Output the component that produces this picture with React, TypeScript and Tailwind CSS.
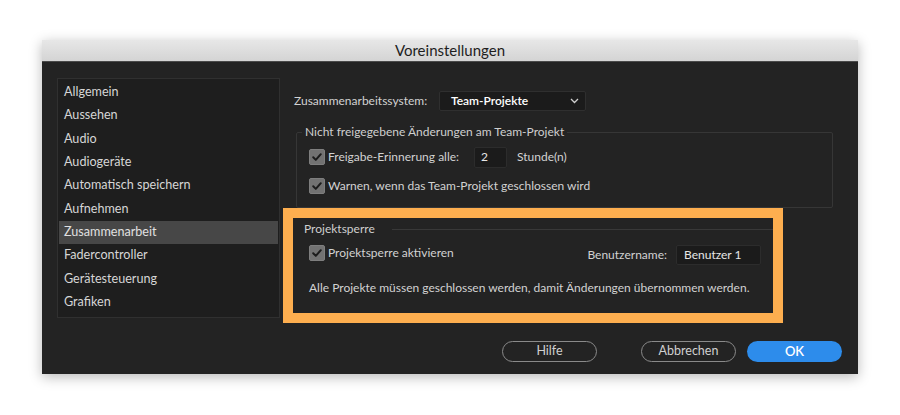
import React from "react";

const items = [
  "Allgemein",
  "Aussehen",
  "Audio",
  "Audiogeräte",
  "Automatisch speichern",
  "Aufnehmen",
  "Zusammenarbeit",
  "Fadercontroller",
  "Gerätesteuerung",
  "Grafiken",
];

function Check() {
  return (
    <div className="w-[16px] h-[16px] rounded-[2px] bg-[#727272] border border-[#7e7e7e] flex items-center justify-center shrink-0">
      <svg width="12" height="12" viewBox="0 0 12 12">
        <path d="M2.2 6.3 L4.8 8.9 L9.8 3.2" fill="none" stroke="#1c1c1c" strokeWidth="2" strokeLinecap="round" strokeLinejoin="round" />
      </svg>
    </div>
  );
}

export default function App() {
  return (
    <div className="w-[900px] h-[415px] bg-white pt-[40px] pl-[42px] font-['Lato',sans-serif]">
      <div className="w-[816px] h-[334px] flex flex-col bg-[#232323] shadow-[0_3px_12px_rgba(0,0,0,0.28)]">
        <div className="h-[22px] shrink-0 bg-gradient-to-b from-[#e7e7e7] to-[#d4d4d4] border-b border-[#4a4a4a] flex items-center justify-center text-[15px] text-[#1e1e1e] leading-none">
          Voreinstellungen
        </div>
        <div className="flex flex-1">
          <div className="pl-[15px] pt-[16px]">
            <div className="w-[223px] h-[240px] border border-[#303030] bg-[#1e1e1e] pt-[1.5px] px-px">
              {items.map((it) => (
                <div
                  key={it}
                  className={
                    "h-[23.4px] flex items-center pl-[5px] text-[12.6px] " +
                    (it === "Zusammenarbeit" ? "bg-[#474747] text-[#e0e0e0]" : "text-[#d6d6d6]")
                  }
                >
                  {it}
                </div>
              ))}
            </div>
          </div>
          <div className="flex-1 flex flex-col text-[12px] text-[#d2d2d2]">
            <div className="mt-[29px] h-[20px] flex items-center pl-[14px]">
              <div className="w-[145px]">Zusammenarbeitssystem:</div>
              <div className="w-[147px] h-[20px] bg-[#1b1b1b] border border-[#2f2f2f] rounded-[2px] flex items-center pl-[11px] pr-[6px]">
                <span className="text-white font-semibold flex-1">Team-Projekte</span>
                <svg width="9" height="6" viewBox="0 0 9 6">
                  <path d="M1 1 L4.5 4.5 L8 1" fill="none" stroke="#cfcfcf" strokeWidth="1.3" />
                </svg>
              </div>
            </div>
            <fieldset className="ml-[16px] mt-[13px] w-[537px] h-[84px] border border-[#363636] rounded-[2px]">
              <legend className="ml-[5px] px-[3px] leading-[16px] text-[#cfcfcf]">
                Nicht freigegebene Änderungen am Team-Projekt
              </legend>
              <div className="mt-[7px] h-[20px] flex items-center pl-[12px]">
                <Check />
                <span className="ml-[3px] w-[146px]">Freigabe-Erinnerung alle:</span>
                <div className="w-[33px] h-[21px] bg-[#1b1b1b] border border-[#2c2c2c] rounded-[2px] flex items-center pl-[6px] text-[#e6e6e6]">
                  2
                </div>
                <span className="ml-[10px]">Stunde(n)</span>
              </div>
              <div className="mt-[9px] h-[20px] flex items-center pl-[12px]">
                <Check />
                <span className="ml-[3px]">Warnen, wenn das Team-Projekt geschlossen wird</span>
              </div>
            </fieldset>
            <div className="ml-[3px] w-[500px] h-[115px] border-[10px] border-[#fdae4f] flex flex-col">
              <div className="h-[22px] flex items-center">
                <span className="w-[99px] pl-[11px] text-[#cfcfcf]">Projektsperre</span>
                <div className="flex-1 h-px bg-[#383838]" />
              </div>
              <div className="mt-[5px] h-[20px] flex items-start">
                <div className="pl-[16px] h-[16px] flex items-center">
                  <Check />
                  <span className="ml-[3px]">Projektsperre aktivieren</span>
                </div>
                <div className="ml-auto mr-[12px] h-[20px] flex items-center">
                  <span>Benutzername:</span>
                  <div className="ml-[9px] w-[85px] h-[20px] bg-[#1b1b1b] border border-[#2c2c2c] rounded-[2px] flex items-center pl-[7px] text-[#e6e6e6]">
                    Benutzer 1
                  </div>
                </div>
              </div>
              <div className="mt-[15px] pl-[16px] leading-[16px] whitespace-nowrap">
                Alle Projekte müssen geschlossen werden, damit Änderungen übernommen werden.
              </div>
            </div>
            <div className="mt-[18px] h-[21px] flex items-center">
              <button className="ml-[222px] w-[95px] h-[21px] rounded-full border-[1.5px] border-[#8a8a8a] text-[#d0d0d0] text-[12.5px] flex items-center justify-center">
                Hilfe
              </button>
              <button className="ml-[44px] w-[95px] h-[21px] rounded-full border-[1.5px] border-[#8a8a8a] text-[#d0d0d0] text-[12.5px] flex items-center justify-center">
                Abbrechen
              </button>
              <button className="ml-[11px] w-[95px] h-[21px] rounded-full bg-[#2d8ceb] text-white text-[13px] font-semibold flex items-center justify-center">
                OK
              </button>
            </div>
          </div>
        </div>
      </div>
    </div>
  );
}
